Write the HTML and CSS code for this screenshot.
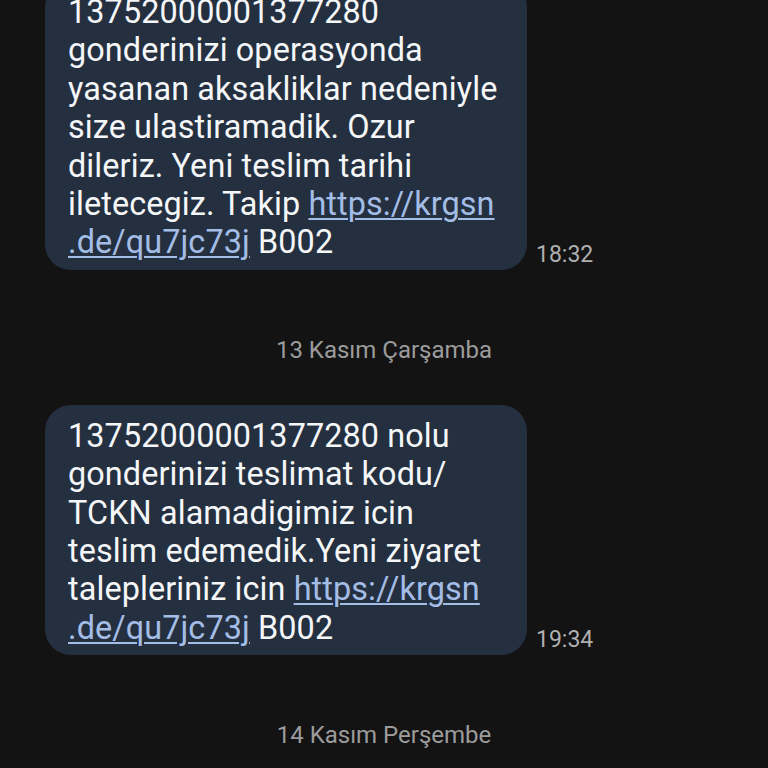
FILE: index.html
```html
<!DOCTYPE html>
<html lang="tr">
<head>
<meta charset="utf-8">
<link rel="stylesheet" href="styles.css">
</head>
<body>
<div class="thread">
  <div class="row first">
    <div class="bubble">13752000001377280<br>gonderinizi operasyonda<br>yasanan aksakliklar nedeniyle<br>size ulastiramadik. Ozur<br>dileriz. Yeni teslim tarihi<br>iletecegiz. Takip <span class="link">https://krgsn<br>.de/qu7jc73j</span> B002</div>
    <div class="time">18:32</div>
  </div>
  <div class="date">13 Kasım Çarşamba</div>
  <div class="row">
    <div class="bubble">13752000001377280 nolu<br>gonderinizi teslimat kodu/<br>TCKN alamadigimiz icin<br>teslim edemedik.Yeni ziyaret<br>talepleriniz icin <span class="link">https://krgsn<br>.de/qu7jc73j</span> B002</div>
    <div class="time">19:34</div>
  </div>
  <div class="date">14 Kasım Perşembe</div>
</div>
</body>
</html>
```
FILE: styles.css
```css
html, body {
  margin: 0;
  padding: 0;
  background: #131313;
  height: 768px;
  overflow: hidden;
}
.thread {
  display: flex;
  flex-direction: column;
  font-family: Roboto, "Noto Sans", sans-serif;
}
.row {
  display: flex;
  align-items: flex-end;
  padding-left: 45px;
}
.row.first {
  margin-top: -19px;
}
.bubble {
  box-sizing: border-box;
  width: 482px;
  background: #243040;
  color: #f4f6f8;
  border-radius: 26px;
  padding: 12px 10px 8px 23px;
  font-size: 32.4px;
  letter-spacing: 0.1px;
  line-height: 38.4px;
  white-space: nowrap;
}
.link {
  color: #a4bde6;
  text-decoration: underline;
  text-decoration-thickness: 2px;
  text-underline-offset: 3px;
}
.time {
  margin-left: 9px;
  margin-bottom: 2px;
  color: #b0b0b0;
  font-size: 23px;
  line-height: 27px;
}
.date {
  text-align: center;
  color: #9c9c9c;
  font-size: 24px;
  line-height: 27px;
  margin: 67px 0 41px;
}
```
